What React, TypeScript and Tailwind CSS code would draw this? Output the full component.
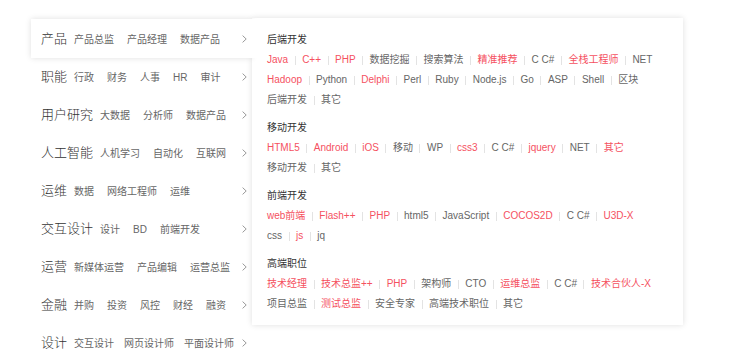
const categories = [
  { name: "产品", subs: ["产品总监", "产品经理", "数据产品"] },
  { name: "职能", subs: ["行政", "财务", "人事", "HR", "审计"] },
  { name: "用户研究", subs: ["大数据", "分析师", "数据产品"] },
  { name: "人工智能", subs: ["人机学习", "自动化", "互联网"] },
  { name: "运维", subs: ["数据", "网络工程师", "运维"] },
  { name: "交互设计", subs: ["设计", "BD", "前端开发"] },
  { name: "运营", subs: ["新媒体运营", "产品编辑", "运营总监"] },
  { name: "金融", subs: ["并购", "投资", "风控", "财经", "融资"] },
  { name: "设计", subs: ["交互设计", "网页设计师", "平面设计师"], tight: true },
];

// [text, hot]
type Tag = [string, boolean?];

const sections: { title: string; rows: Tag[][] }[] = [
  {
    title: "后端开发",
    rows: [
      [["Java", true], ["C++", true], ["PHP", true], ["数据挖掘"], ["搜索算法"], ["精准推荐", true], ["C C#"], ["全栈工程师", true], ["NET"]],
      [["Hadoop", true], ["Python"], ["Delphi", true], ["Perl"], ["Ruby"], ["Node.js"], ["Go"], ["ASP"], ["Shell"], ["区块"]],
      [["后端开发"], ["其它"]],
    ],
  },
  {
    title: "移动开发",
    rows: [
      [["HTML5", true], ["Android", true], ["iOS", true], ["移动"], ["WP"], ["css3", true], ["C C#"], ["jquery", true], ["NET"], ["其它", true]],
      [["移动开发"], ["其它"]],
    ],
  },
  {
    title: "前端开发",
    rows: [
      [["web前端", true], ["Flash++", true], ["PHP", true], ["html5"], ["JavaScript"], ["COCOS2D", true], ["C C#"], ["U3D-X", true]],
      [["css"], ["js", true], ["jq"]],
    ],
  },
  {
    title: "高端职位",
    rows: [
      [["技术经理", true], ["技术总监++", true], ["PHP", true], ["架构师"], ["CTO"], ["运维总监", true], ["C C#"], ["技术合伙人-X", true]],
      [["项目总监"], ["测试总监", true], ["安全专家"], ["高端技术职位"], ["其它"]],
    ],
  },
];

function Chevron() {
  return (
    <svg width="5" height="8" viewBox="0 0 5 8" className="shrink-0">
      <polyline points="0.6,0.6 4.2,4 0.6,7.4" fill="none" stroke="#999" strokeWidth="1" />
    </svg>
  );
}

export default function App() {
  return (
    <div className="min-h-[361px] bg-white pl-[31px] pt-[20px] text-[#333] [font-family:'Liberation_Sans','Noto_Sans_CJK_SC',sans-serif]">
      <div className="relative w-[221px]">
        {categories.map((c, i) => (
          <div
            key={c.name}
            className={
              "relative flex h-[38px] items-center pl-[10px] pr-[5px] " +
              (i === 0 ? "z-20 -mt-px h-[39px] bg-white pt-px shadow-[0_0_6px_rgba(0,0,0,0.13)]" : "")
            }
          >
            <div className="flex min-w-0 flex-1 items-baseline">
              <span className="shrink-0 text-[13px] font-light text-[#333]">{c.name}</span>
              <div className={"ml-[7px] flex items-baseline text-[10px] text-[#666] " + (c.tight ? "gap-[10px]" : "gap-[13px]")}>
                {c.subs.map((s) => (
                  <span key={s} className="whitespace-nowrap">{s}</span>
                ))}
              </div>
            </div>
            <Chevron />
            {i === 0 && <div className="absolute -right-[8px] top-0 h-full w-[10px] bg-white" />}
          </div>
        ))}

        <div className="absolute left-[221px] top-[-1px] z-10 h-[307px] w-[431px] bg-white pl-[15px] pr-[15px] pt-[12px] shadow-[0_0_6px_rgba(0,0,0,0.13)]">
          {sections.map((sec, si) => (
            <div key={sec.title} className={si > 0 ? "mt-[8px]" : ""}>
              <div className="h-[20px] text-[10px] leading-[20px] text-[#333]">{sec.title}</div>
              {sec.rows.map((row, ri) => (
                <div key={ri} className="flex h-[20px] items-center text-[10px] leading-[20px]">
                  {row.map(([t, hot], ti) => (
                    <div key={ti} className="flex items-center">
                      {ti > 0 && <span className="mx-[6.5px] h-[9px] w-px bg-[#e3e3e3]" />}
                      <span className={"whitespace-nowrap " + (hot ? "text-[#f5515f]" : "text-[#666]")}>{t}</span>
                    </div>
                  ))}
                </div>
              ))}
            </div>
          ))}
        </div>
      </div>
    </div>
  );
}
